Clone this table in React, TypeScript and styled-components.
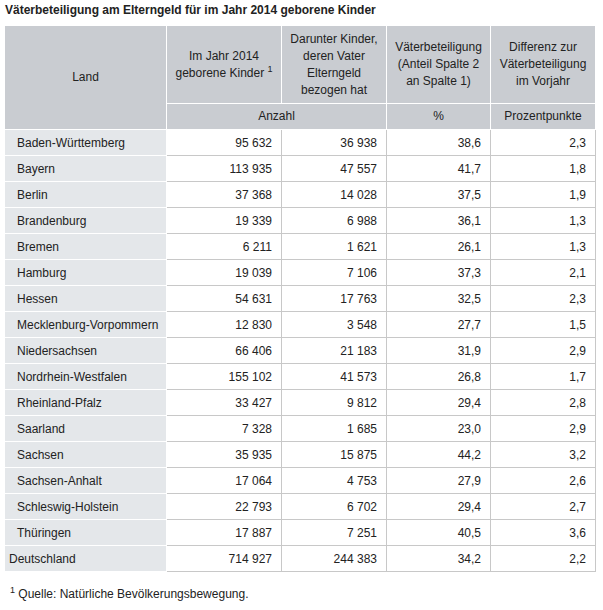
import React from "react";
import styled, {createGlobalStyle} from "styled-components";

const Global = createGlobalStyle`
  body {
    margin: 0;
    font-family: "Liberation Sans", Arial, sans-serif;
    font-size: 12px;
    color: #222;
    background: white;
  }
`;

const Page = styled.div`
  padding: 2px 7px 0 5px;
`;

const Title = styled.h1`
  margin: 0 0 7px;
  font-size: 12px;
  line-height: 17px;
  font-weight: bold;
`;

const Grid = styled.table`
  width: 591px;
  table-layout: fixed;
  border-collapse: separate;
  border-spacing: 0;
`;

const Head = styled.th<{tall?: boolean}>`
  box-sizing: border-box;
  background: #c9ccd1;
  border-right: 1px solid #fff;
  border-bottom: 1px solid #fff;
  font-weight: normal;
  text-align: center;
  vertical-align: middle;
  line-height: 17px;
  padding: 0 6px;
  height: ${p => p.tall ? 78 : 26}px;
`;

const Land = styled.td<{total?: boolean}>`
  box-sizing: border-box;
  background: #e4e7ea;
  border-right: 1px solid #fff;
  border-bottom: 1px solid #fff;
  height: 26px;
  padding: 0 0 0 ${p => p.total ? 4 : 12}px;
  white-space: nowrap;
`;

const Num = styled.td`
  box-sizing: border-box;
  border-right: 1px solid #c8c8c8;
  border-bottom: 1px solid #c8c8c8;
  text-align: right;
  padding: 0 9px 0 0;
  height: 26px;
`;

const Sup = styled.sup`
  font-size: 9px;
  line-height: 0;
  vertical-align: 5px;
`;

const Note = styled.p`
  margin: 14px 0 0 5px;
  line-height: 17px;
`;

const rows: [string, string, string, string, string][] = [
  ["Baden-Württemberg", "95 632", "36 938", "38,6", "2,3"],
  ["Bayern", "113 935", "47 557", "41,7", "1,8"],
  ["Berlin", "37 368", "14 028", "37,5", "1,9"],
  ["Brandenburg", "19 339", "6 988", "36,1", "1,3"],
  ["Bremen", "6 211", "1 621", "26,1", "1,3"],
  ["Hamburg", "19 039", "7 106", "37,3", "2,1"],
  ["Hessen", "54 631", "17 763", "32,5", "2,3"],
  ["Mecklenburg-Vorpommern", "12 830", "3 548", "27,7", "1,5"],
  ["Niedersachsen", "66 406", "21 183", "31,9", "2,9"],
  ["Nordrhein-Westfalen", "155 102", "41 573", "26,8", "1,7"],
  ["Rheinland-Pfalz", "33 427", "9 812", "29,4", "2,8"],
  ["Saarland", "7 328", "1 685", "23,0", "2,9"],
  ["Sachsen", "35 935", "15 875", "44,2", "3,2"],
  ["Sachsen-Anhalt", "17 064", "4 753", "27,9", "2,6"],
  ["Schleswig-Holstein", "22 793", "6 702", "29,4", "2,7"],
  ["Thüringen", "17 887", "7 251", "40,5", "3,6"],
];

const total: [string, string, string, string, string] = ["Deutschland", "714 927", "244 383", "34,2", "2,2"];

export default function App() {
  return <Page>
    <Global />
    <Title>Väterbeteiligung am Elterngeld für im Jahr 2014 geborene Kinder</Title>
    <Grid>
      <colgroup>
        <col style={{width: 162}} />
        <col style={{width: 115}} />
        <col style={{width: 105}} />
        <col style={{width: 104}} />
        <col style={{width: 105}} />
      </colgroup>
      <thead>
        <tr>
          <Head rowSpan={2}>Land</Head>
          <Head tall>Im Jahr 2014<br />geborene Kinder <Sup>1</Sup></Head>
          <Head tall>Darunter Kinder, deren Vater Elterngeld bezogen hat</Head>
          <Head tall>Väterbeteiligung (Anteil Spalte 2 an Spalte 1)</Head>
          <Head tall>Differenz zur Väterbeteiligung im Vorjahr</Head>
        </tr>
        <tr>
          <Head colSpan={2}>Anzahl</Head>
          <Head>%</Head>
          <Head>Prozentpunkte</Head>
        </tr>
      </thead>
      <tbody>
        {[...rows, total].map(r => <tr key={r[0]}>
          <Land total={r === total}>{r[0]}</Land>
          {r.slice(1).map((v, i) => <Num key={i}>{v}</Num>)}
        </tr>)}
      </tbody>
    </Grid>
    <Note><Sup>1</Sup> Quelle: Natürliche Bevölkerungsbewegung.</Note>
  </Page>;
}
